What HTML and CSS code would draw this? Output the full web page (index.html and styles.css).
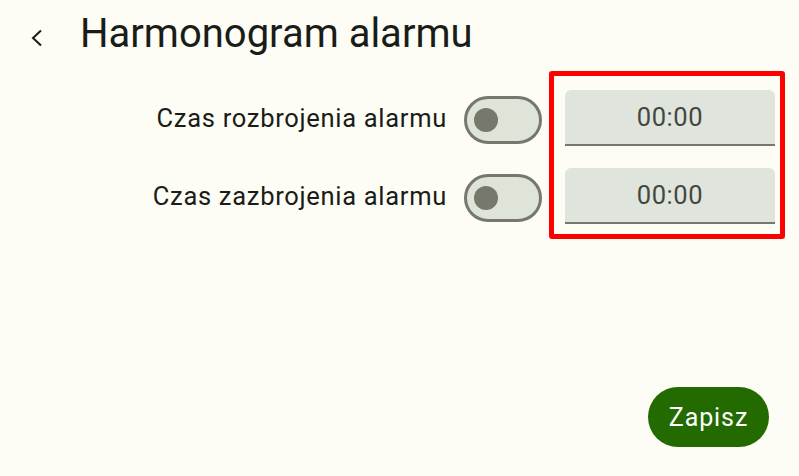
FILE: index.html
```html
<!DOCTYPE html>
<html lang="pl">
<head>
    <meta charset="UTF-8">
    <meta name="viewport" content="width=device-width, initial-scale=1.0">
    <title>Harmonogram alarmu</title>
    <link rel="stylesheet" href="styles.css">
</head>
<body>
    <header class="top-bar">
        <button class="back" aria-label="Wstecz">
            <svg width="18" height="20" viewBox="0 0 18 20">
                <path d="M14 2.5 L6 10 L14 17.5" fill="none" stroke="#1a1c18" stroke-width="2"/>
            </svg>
        </button>
        <h1>Harmonogram alarmu</h1>
    </header>
    <div class="content">
        <div class="rows">
            <div class="row">
                <span class="label">Czas rozbrojenia alarmu</span>
                <span class="switch"><span class="knob"></span></span>
            </div>
            <div class="row">
                <span class="label">Czas zazbrojenia alarmu</span>
                <span class="switch"><span class="knob"></span></span>
            </div>
        </div>
        <div class="times">
            <div class="time-field">00:00</div>
            <div class="time-field">00:00</div>
        </div>
    </div>
    <div class="actions">
        <button class="save">Zapisz</button>
    </div>
</body>
</html>
```

FILE: styles.css
```css
body {
    font-family: Roboto, "Noto Sans", sans-serif;
    margin: 0;
    padding: 0;
    background-color: #fdfdf5;
    color: #1a1c18;
}
.top-bar {
    display: flex;
    align-items: center;
    height: 71px;
    padding-left: 26px;
}
.back {
    background: none;
    border: none;
    padding: 0;
    width: 20px;
    height: 20px;
    display: flex;
    align-items: center;
    justify-content: center;
    margin-right: 34px;
    margin-top: 4px;
}
h1 {
    margin: 0;
    font-size: 40px;
    font-weight: 400;
    margin-top: -4px;
}
.content {
    display: flex;
    justify-content: flex-end;
    padding-right: 14px;
}
.rows {
    display: flex;
    flex-direction: column;
    gap: 22px;
    padding-top: 19px;
    margin-right: 7px;
}
.row {
    display: flex;
    align-items: center;
    justify-content: flex-end;
    height: 56px;
    gap: 17px;
}
.label {
    font-size: 25.5px;
    letter-spacing: 0.7px;
}
.switch {
    box-sizing: border-box;
    width: 78px;
    height: 48px;
    border: 3px solid #74786f;
    border-radius: 24px;
    background: #dfe4d8;
    display: flex;
    align-items: center;
    padding-left: 7px;
    margin-top: 4px;
}
.knob {
    width: 24px;
    height: 24px;
    border-radius: 50%;
    background: #75786b;
}
.times {
    box-sizing: border-box;
    width: 236px;
    border: 5px solid #ff0000;
    border-radius: 3px;
    padding: 14px 5px 10px 11px;
    display: flex;
    flex-direction: column;
    gap: 22px;
}
.time-field {
    box-sizing: border-box;
    height: 56px;
    background: #dfe4dc;
    border-bottom: 2px solid #74786f;
    border-radius: 6px 6px 0 0;
    display: flex;
    align-items: center;
    justify-content: center;
    font-size: 25.5px;
    color: #43483f;
    letter-spacing: 0.6px;
}
.actions {
    display: flex;
    justify-content: flex-end;
    padding-right: 30px;
    margin-top: 148px;
}
.save {
    font-family: Roboto, sans-serif;
    background-color: #236b00;
    color: #fff;
    border: none;
    width: 121px;
    height: 60px;
    border-radius: 30px;
    font-size: 25px;
    letter-spacing: 0.9px;
    cursor: pointer;
}
```
